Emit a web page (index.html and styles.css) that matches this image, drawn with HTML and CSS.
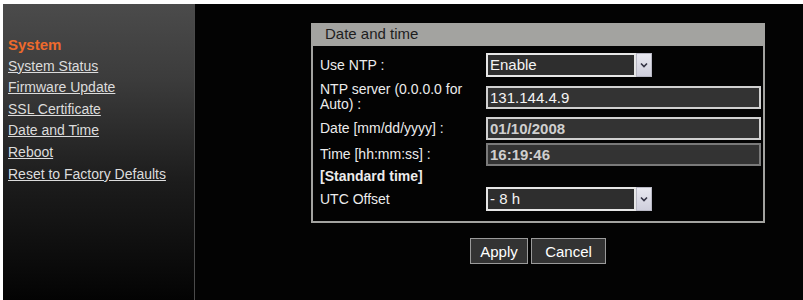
FILE: index.html
```html
<!DOCTYPE html>
<html lang="en">

<head>
    <meta charset="UTF-8" />
    <meta name="viewport" content="width=device-width, initial-scale=1.0" />
    <title>Date and time</title>
    <link rel="stylesheet" href="styles.css">
</head>

<body>
    <div class="page">
        <!-- left menu -->
        <nav class="sidebar">
            <div class="menu-title">System</div>
            <a href="#" class="menu-link">System Status</a>
            <a href="#" class="menu-link">Firmware Update</a>
            <a href="#" class="menu-link">SSL Certificate</a>
            <a href="#" class="menu-link">Date and Time</a>
            <a href="#" class="menu-link">Reboot</a>
            <a href="#" class="menu-link">Reset to Factory Defaults</a>
        </nav>

        <!-- settings -->
        <main class="content">
            <div class="panel">
                <div class="panel-head">Date and time</div>
                <div class="panel-body">
                    <div class="row row-select">
                        <div class="label">Use NTP :</div>
                        <div class="select">
                            <div class="select-value">Enable</div>
                            <div class="select-arrow">
                                <svg width="8" height="6" viewBox="0 0 8 6"><path d="M1 1.5 L4 4.5 L7 1.5" fill="none" stroke="#334" stroke-width="1.6"/></svg>
                            </div>
                        </div>
                    </div>
                    <div class="row row-tall">
                        <div class="label">NTP server (0.0.0.0 for<br>Auto) :</div>
                        <input class="field" type="text" value="131.144.4.9">
                    </div>
                    <div class="row">
                        <div class="label">Date [mm/dd/yyyy] :</div>
                        <input class="field field-dim" type="text" value="01/10/2008">
                    </div>
                    <div class="row">
                        <div class="label">Time [hh:mm:ss] :</div>
                        <input class="field field-dim field-gray" type="text" value="16:19:46">
                    </div>
                    <div class="row row-heading">
                        <div class="label label-bold">[Standard time]</div>
                    </div>
                    <div class="row row-select">
                        <div class="label">UTC Offset</div>
                        <div class="select">
                            <div class="select-value">- 8 h</div>
                            <div class="select-arrow">
                                <svg width="8" height="6" viewBox="0 0 8 6"><path d="M1 1.5 L4 4.5 L7 1.5" fill="none" stroke="#334" stroke-width="1.6"/></svg>
                            </div>
                        </div>
                    </div>
                </div>
            </div>

            <div class="buttons">
                <button class="btn btn-apply">Apply</button>
                <button class="btn btn-cancel">Cancel</button>
            </div>
        </main>
    </div>
</body>

</html>
```

FILE: styles.css
```css
body {
    margin: 0;
    background: #fff;
    font-family: "Liberation Sans", Arial, sans-serif;
    overflow: hidden;
}

.page {
    display: flex;
    height: 296px;
    padding: 4px 0 0 3px;
}

/* left menu */
.sidebar {
    box-sizing: border-box;
    width: 192px;
    flex-shrink: 0;
    padding: 30px 0 0 5px;
    background: linear-gradient(#4b4b4b 0%, #3c3c3c 25%, #1c1c1c 60%, #0b0b0b 88%, #030303 100%);
    border-right: 1px solid #4a4a4a;
    display: flex;
    flex-direction: column;
    align-items: flex-start;
    line-height: 21.6px;
}

.menu-title {
    color: #ee6a2c;
    font-size: 15px;
    font-weight: bold;
}

.menu-link {
    color: #dcdcdc;
    font-size: 14px;
    text-decoration: underline;
}

/* main area */
.content {
    flex: 1;
    background: #030303;
    padding: 19px 0 0 116px;
}

.panel {
    width: 450px;
    border: 2px solid #a3a3a0;
    border-top-width: 0;
}

.panel-head {
    height: 23px;
    line-height: 22px;
    background: #a3a3a0;
    color: #1e1e1e;
    font-size: 15px;
    padding-left: 12px;
}

.panel-body {
    padding: 7px 2px 9px 7px;
}

.row {
    display: flex;
    align-items: center;
    height: 26px;
}

.row-select {
    height: 24px;
    margin-bottom: 5px;
}

.row-tall {
    height: 30px;
    margin-bottom: 3px;
}

.row-heading {
    height: 19px;
}

.label {
    width: 166px;
    flex-shrink: 0;
    color: #ececec;
    font-size: 14px;
    line-height: 15px;
}

.label-bold {
    font-weight: bold;
}

.row-heading + .row-select {
    margin-bottom: 0;
    height: 26px;
}

/* inputs */
.field {
    box-sizing: border-box;
    width: 275px;
    height: 23px;
    margin: 0;
    padding: 0 2px;
    background: #333;
    border: 2px solid #d0d0d0;
    color: #f4f4f4;
    font-family: inherit;
    font-size: 15px;
}

.field-dim {
    color: #cfcfcf;
    font-weight: bold;
}

.field-gray {
    border-color: #7a7a7a;
}

/* dropdown */
.select {
    display: flex;
    height: 24px;
}

.select-value {
    box-sizing: border-box;
    width: 150px;
    height: 24px;
    padding: 0 2px;
    border: 2px solid #e6e6e6;
    background: #2e2e2e;
    color: #f4f4f4;
    font-size: 15px;
    line-height: 19px;
}

.select-arrow {
    box-sizing: border-box;
    width: 16px;
    height: 24px;
    border: 1px solid #b8b8c4;
    background: linear-gradient(#e8e8f0, #cfcfdc);
    display: flex;
    align-items: center;
    justify-content: center;
}

/* buttons */
.buttons {
    width: 454px;
    display: flex;
    justify-content: center;
    gap: 3px;
    margin-top: 15px;
}

.btn {
    height: 26px;
    margin: 0;
    background: #333;
    border: 1px solid #9a9a9a;
    color: #fff;
    font-family: inherit;
    font-size: 15px;
    padding: 0;
}

.btn-apply {
    width: 58px;
}

.btn-cancel {
    width: 75px;
}
```
